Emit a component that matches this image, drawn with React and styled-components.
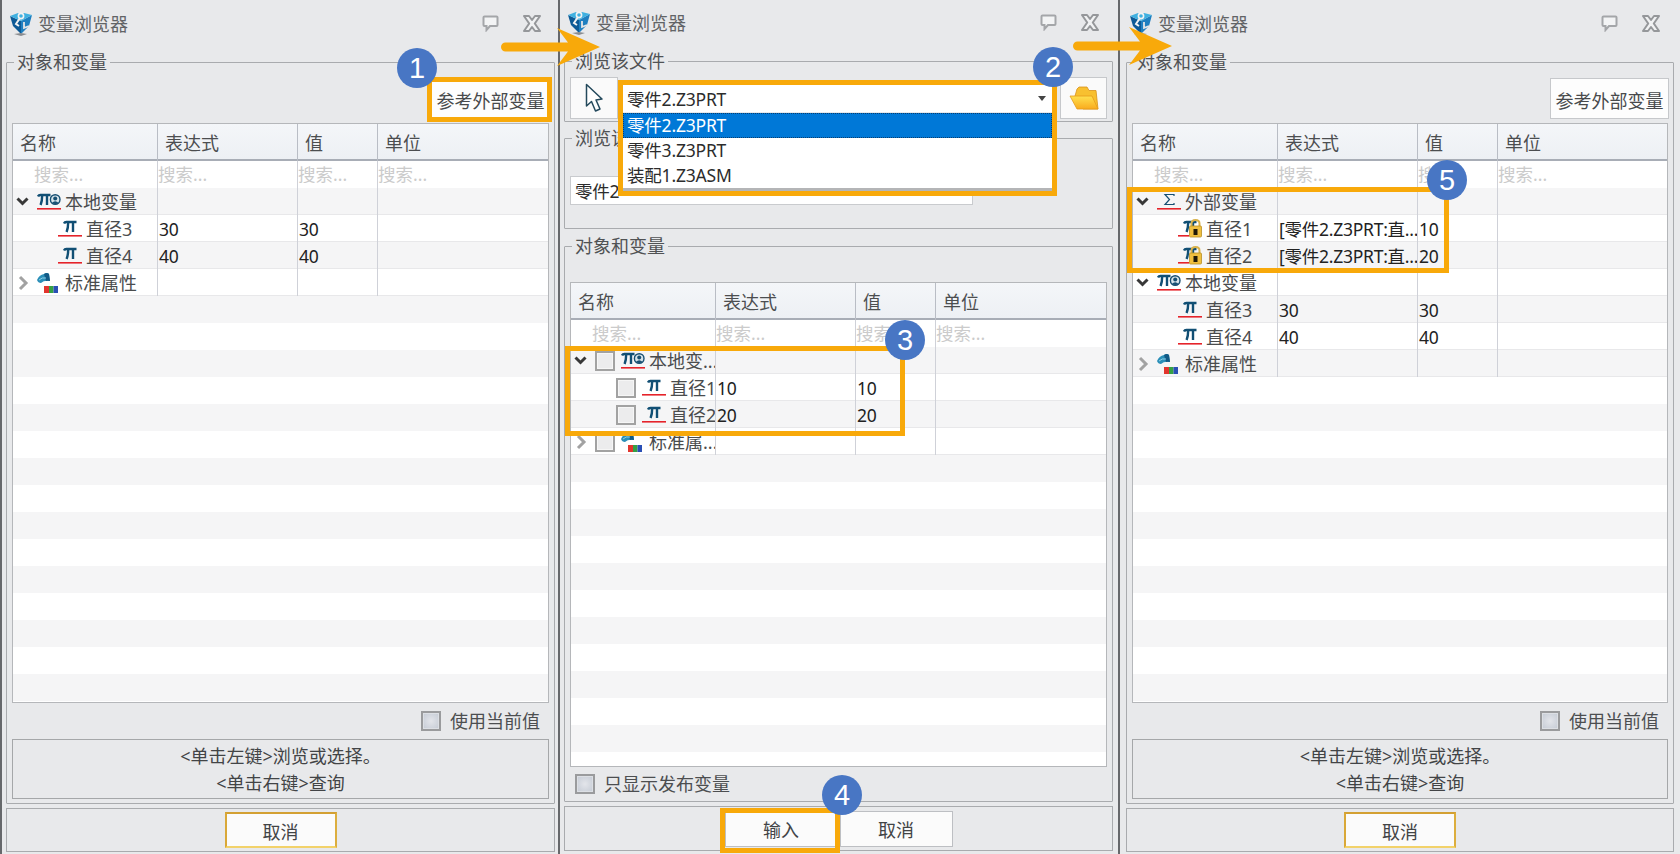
import React from 'react';
import styled, { createGlobalStyle } from 'styled-components';

const ORANGE = '#f8a90a';
const FONT = '"Noto Sans", "Noto Sans CJK SC", sans-serif';

const GlobalStyle = createGlobalStyle`
  html, body {
    margin: 0;
    padding: 0;
    background: #e8e9eb;
  }
  body {
    font-family: ${FONT};
    font-size: 18px;
    color: #444;
  }
  * {
    box-sizing: border-box;
  }
`;

const Page = styled.div`
  position: relative;
  display: flex;
  width: 1680px;
  height: 854px;
  overflow: hidden;
  background: #e8e9eb;
`;

const Panel = styled.section`
  display: flex;
  flex-direction: column;
  flex: 0 0 560px;
  height: 854px;
  padding: 0 ${(p) => p.$right}px ${(p) => p.$bottom}px ${(p) => p.$left}px;
  border-left: ${(p) => (p.$barLeft ? 2 : 0)}px solid #66686b;
  border-right: ${(p) => (p.$barRight ? 2 : 0)}px solid #66686b;
`;

const TitleBar = styled.header`
  display: flex;
  align-items: flex-start;
  flex: 0 0 ${(p) => p.$height}px;
  padding: ${(p) => p.$height - 39}px 14px 0 4px;
`;

const TitleText = styled.h1`
  flex: 1;
  margin: 0 0 0 6px;
  font-size: 18px;
  font-weight: 400;
  line-height: 24px;
  color: #626466;
`;

const TitleAction = styled.span`
  display: flex;
  margin-left: ${(p) => p.$gap}px;
  padding-top: 3px;
`;

const GroupBox = styled.fieldset`
  display: flex;
  flex-direction: column;
  flex: ${(p) => (p.$grow ? '1 1 0' : '0 0 auto')};
  min-height: 0;
  min-width: 0;
  margin: ${(p) => p.$top || 0}px 0 0;
  padding: 0 5px ${(p) => p.$pad || 0}px;
  border: 1px solid #a9abae;
  border-radius: 1px;
`;

const GroupTitle = styled.legend`
  height: 22px;
  margin-left: 2px;
  padding: 0 3px;
  font-size: 18px;
  line-height: 22px;
  color: #505254;
`;

const RefRow = styled.div`
  display: flex;
  justify-content: flex-end;
  margin: 5px -1px 0 0;
`;

const RefButton = styled.button`
  width: 119px;
  height: 41px;
  padding: 2px 0 0;
  border: 1px solid #c6c8cb;
  background: #fdfdfd;
  font: inherit;
  color: #484a4c;
`;

const Table = styled.div`
  display: flex;
  flex-direction: column;
  flex: 1 1 0;
  min-height: 0;
  margin-top: ${(p) => p.$top}px;
  overflow: hidden;
  border: 1px solid #b5b7ba;
  background: #fff;
`;

const Columns = styled.div`
  display: grid;
  flex: none;
  grid-template-columns: 145px 140px 80px 1fr;
`;

const HeaderRow = styled(Columns)`
  height: 37px;
  border-bottom: 2px solid #a8adb6;
  background: linear-gradient(#f4f6f9, #edf0f4);
`;

const HeaderCell = styled.div`
  padding-left: 7px;
  border-right: 1px solid #b9bdc5;
  line-height: 39px;
  color: #4c4e50;

  &:last-child {
    border-right: 0;
  }
`;

const Row = styled(Columns)`
  height: 27px;
  background: ${(p) => (p.$alt ? '#f5f5f6' : '#fff')};
  box-shadow: ${(p) => (p.$line ? 'inset 0 -1px 0 #e8e8ea' : 'none')};
`;

const Cell = styled.div`
  overflow: hidden;
  padding-left: 1px;
  border-right: 1px solid #cfd1d8;
  font-size: 17.5px;
  letter-spacing: -0.25px;
  line-height: 28px;
  white-space: nowrap;
  color: #222;

  &:last-child {
    border-right: 0;
  }
`;

const SearchCell = styled(Cell)`
  padding-left: ${(p) => (p.$first ? 21 : 0)}px;
  letter-spacing: 0;
  line-height: 26px;
  color: #cbcbcb;
`;

const NameCell = styled(Cell)`
  display: flex;
  align-items: center;
  padding-left: ${(p) => p.$indent}px;
  font-size: 18px;
  letter-spacing: 0;
  color: #4a4c4d;
`;

const FillerRow = styled.div`
  flex: none;
  height: 27px;
  background: ${(p) => (p.$alt ? '#f5f5f6' : '#fff')};
`;

const Twisty = styled.span`
  display: flex;
  flex: 0 0 13px;
  margin-right: 8px;
`;

const IconSlot = styled.span`
  display: flex;
  flex: 0 0 24px;
  margin-right: 4px;
`;

const TreeCheck = styled.span`
  flex: 0 0 20px;
  height: 20px;
  margin-right: 6px;
  border: 2px solid #a2a2a2;
  background: #ececed;
  box-shadow: inset 0 0 0 1px #f6f6f6;
`;

const CheckRow = styled.div`
  display: flex;
  align-items: center;
  justify-content: ${(p) => (p.$end ? 'flex-end' : 'flex-start')};
  gap: 9px;
  flex: none;
  height: 20px;
  margin-top: ${(p) => p.$top}px;
  padding: ${(p) => (p.$end ? '0 9px 0 0' : '0 0 0 5px')};
  line-height: 20px;
  color: #4c4e50;
`;

const CheckBox = styled.span`
  flex: 0 0 20px;
  height: 20px;
  border: 2px solid #9a9b9d;
  background: radial-gradient(circle at 50% 50%, #e3e5ea 0%, #c4cad4 100%);
  box-shadow: inset 0 0 0 1px #dcdfe4;
`;

const HintBox = styled.div`
  flex: none;
  height: 60px;
  margin-top: 8px;
  padding-top: 3px;
  border: 1px solid #a5a7a9;
  line-height: 27px;
  text-align: center;
  color: #424446;
`;

const Footer = styled.footer`
  display: flex;
  align-items: center;
  justify-content: center;
  gap: 2px;
  flex: 0 0 ${(p) => p.$height}px;
  margin-top: 4px;
  border: 1px solid #a9abae;
`;

const FooterButton = styled.button`
  width: ${(p) => (p.$active ? 112 : 113)}px;
  height: 36px;
  padding: ${(p) => (p.$active ? 2 : 0)}px 0 0;
  border-style: solid;
  border-width: ${(p) => (p.$active ? 2 : 1)}px;
  border-color: ${(p) => (p.$active ? '#d3a032 #dcae3e #f2d26a #d9a838' : '#bdbfc3')};
  background: #fbfbfb;
  font: inherit;
  color: #424446;
`;

const FileRow = styled.div`
  display: flex;
  height: 42px;
  margin-top: 5px;
  align-items: center;
`;

const ToolButton = styled.button`
  display: flex;
  align-items: center;
  justify-content: center;
  flex: 0 0 ${(p) => p.$width}px;
  height: 42px;
  padding: 0;
  border: 1px solid #c6c8cb;
  background: #fafafa;
`;

/* the open combo must stay above the group boxes that follow it */
const Combo = styled.div`
  position: relative;
  z-index: ${(p) => (p.$open ? 2 : 0)};
  display: flex;
  align-items: center;
  flex: ${(p) => (p.$open ? '1' : 'none')};
  width: ${(p) => (p.$width ? `${p.$width}px` : 'auto')};
  height: ${(p) => p.$height}px;
  margin: ${(p) => p.$margin};
  padding-left: 4px;
  border: ${(p) => (p.$open ? '0' : '1px solid #c9cbce')};
  background: #fff;
  font-size: 17.5px;
  letter-spacing: -0.2px;
  color: #2c2c2c;
`;

const Caret = styled.span`
  position: absolute;
  right: ${(p) => p.$right}px;
  top: 50%;
  margin-top: -2px;
  border-style: solid;
  border-width: 5px 4px 0;
  border-color: #444 transparent transparent;
`;

const DropList = styled.ul`
  position: absolute;
  top: 28px;
  left: 0;
  right: 0;
  margin: 0;
  padding: 0;
  list-style: none;
  background: #fff;
  border-bottom: 3px solid #b4b5b7;
`;

const DropItem = styled.li`
  height: 25px;
  padding-left: 4px;
  line-height: 24px;
  color: ${(p) => (p.$selected ? '#fff' : '#2c2c2c')};
  background: ${(p) => (p.$selected ? '#0078d7' : '#fff')};
  outline: ${(p) => (p.$selected ? '1px dotted #0a3f70' : 'none')};
  outline-offset: -1px;
`;

/* annotations on top of the three screenshots */
const Highlight = styled.div`
  position: absolute;
  z-index: 3;
  left: ${(p) => p.$x}px;
  top: ${(p) => p.$y}px;
  width: ${(p) => p.$w}px;
  height: ${(p) => p.$h}px;
  border: 5px solid ${ORANGE};
`;

const Badge = styled.div`
  position: absolute;
  z-index: 3;
  left: ${(p) => p.$x - 20}px;
  top: ${(p) => p.$y - 20}px;
  width: 40px;
  height: 40px;
  border-radius: 50%;
  background: #4876c4;
  font: 29px/40px "Liberation Sans", Arial, sans-serif;
  text-align: center;
  color: #fff;
`;

const ArrowWrap = styled.svg`
  position: absolute;
  z-index: 3;
  left: ${(p) => p.$x}px;
  top: ${(p) => p.$y}px;
`;

const LogoIcon = () => (
  <svg width="22" height="24" viewBox="0 0 22 24">
    <path d="M0 4 L11 9 L11 22 L3 14 Z" fill="#0d5a96" />
    <path d="M22 3 L11 9 L11 22 L19 14 Z" fill="#1f7fc0" />
    <path d="M0 4 L8 1 L14 1 L22 3 L11 9 Z" fill="#3fb0e0" />
    <path d="M4 22 L11 24 L17 22 L11 21 Z" fill="#8a8c90" />
    <circle cx="11" cy="4" r="2.6" fill="none" stroke="#f2f2f2" strokeWidth="1.6" />
    <path d="M10 6 L6 12 L9 14" fill="none" stroke="#f2f2f2" strokeWidth="2" />
    <path d="M14 10 L14 16 L19 14" fill="none" stroke="#e6e6e6" strokeWidth="1.8" />
  </svg>
);

const CommentIcon = () => (
  <svg width="17" height="17" viewBox="0 0 17 17">
    <path d="M2.5 1.5 H14.5 Q15.5 1.5 15.5 2.5 V10 Q15.5 11 14.5 11 H8 L4.5 15 V11 H2.5 Q1.5 11 1.5 10 V2.5 Q1.5 1.5 2.5 1.5 Z" fill="#f3f4f5" stroke="#a4a6a9" strokeWidth="2" />
  </svg>
);

const CloseIcon = () => (
  <svg width="18" height="17" viewBox="0 0 18 17">
    <path d="M1 1 H6 L9 5 L12 1 H17 L11.8 8.5 L17 16 H12 L9 12 L6 16 H1 L6.2 8.5 Z" fill="#f1f2f3" stroke="#95979a" strokeWidth="2" strokeLinejoin="round" />
  </svg>
);

const PiGlyph = ({ x = 0 }) => (
  <g transform={`translate(${x} 0)`} fill="none" stroke="#114f74" strokeWidth="2.4">
    <path d="M1 4.5 Q1.6 3 3.4 3 H13.5" />
    <path d="M5.2 3 Q5.2 9 3.6 13" />
    <path d="M10 3 V13" />
  </g>
);

const RedLine = ({ from = 0, to = 24 }) => <rect x={from} y="16" width={to - from} height="1.6" fill="#e5232a" />;

const PiIcon = () => (
  <svg width="24" height="19" viewBox="0 0 24 19">
    <PiGlyph x={5} />
    <RedLine />
  </svg>
);

const LocalIcon = () => (
  <svg width="24" height="19" viewBox="0 0 24 19">
    <PiGlyph x={0} />
    <circle cx="18.2" cy="7.5" r="4.8" fill="#d7e4ea" stroke="#174f72" strokeWidth="1.4" />
    <circle cx="18.2" cy="6.4" r="2" fill="#174f72" />
    <path d="M14.8 11 Q18.2 7.4 21.6 11 Q18.2 13.2 14.8 11 Z" fill="#174f72" />
    <RedLine />
  </svg>
);

const SigmaIcon = () => (
  <svg width="24" height="19" viewBox="0 0 24 19">
    <path d="M17 4 V2.5 H8 L12.5 7.5 L8 12.5 H17 V11" fill="none" stroke="#174f72" strokeWidth="1.2" />
    <RedLine />
  </svg>
);

const LockedIcon = () => (
  <svg width="24" height="19" viewBox="0 0 24 19">
    <PiGlyph x={5} />
    <RedLine to={11} />
    <path d="M13.5 8 V4.5 Q13.5 1 17.5 1 Q21.5 1 21.5 4.5 V8" fill="none" stroke="#d9b24a" strokeWidth="2" />
    <rect x="11.5" y="7" width="12" height="11" rx="1" fill="#f0c040" stroke="#b78f24" strokeWidth="0.8" />
    <rect x="15.5" y="10" width="4" height="6" fill="#201a08" />
  </svg>
);

const StdIcon = () => (
  <svg width="24" height="22" viewBox="0 0 24 22">
    <path d="M0 8 Q2 3 7 2 Q10 0 12 2 L13 9 Q7 8 4 11 Q1 11 0 8 Z" fill="#2b8fb8" />
    <path d="M7 2 Q10 0 12 2 L13 9 Q11 8.6 9 9 Z" fill="#125a86" />
    <path d="M2 8 Q5 5 9 6" fill="none" stroke="#8fd0e8" strokeWidth="1" />
    <rect x="7" y="14" width="5" height="7" fill="#e2352e" />
    <rect x="12" y="14" width="4.5" height="7" fill="#35a145" />
    <rect x="16.5" y="14" width="4.5" height="7" fill="#2a4fb5" />
  </svg>
);

const CursorIcon = () => (
  <svg width="18" height="30" viewBox="0 0 18 30">
    <path d="M1.5 1.5 V23 L6.5 18.5 L10.5 28 L15 26 L11 17 L17 16 Z" fill="#fff" stroke="#24495c" strokeWidth="1.5" strokeLinejoin="round" />
  </svg>
);

const FolderIcon = () => (
  <svg width="30" height="24" viewBox="0 0 30 24">
    <defs>
      <linearGradient id="folderFront" x1="0" y1="0" x2="0" y2="1">
        <stop offset="0" stopColor="#ffe04f" />
        <stop offset="1" stopColor="#f9ab1e" />
      </linearGradient>
    </defs>
    <path d="M6 10 L8 3 L10 1 H18 L20 4.5 H27 L29 23 H14 Z" fill="#f8c030" stroke="#d8921c" strokeWidth="0.8" />
    <path d="M1 10 H23 L29 23 H8 Z" fill="url(#folderFront)" stroke="#e59a1a" strokeWidth="0.8" />
  </svg>
);

const ChevronDown = () => (
  <svg width="13" height="13" viewBox="0 0 13 13">
    <path d="M1.5 3.5 L6.5 8.5 L11.5 3.5" fill="none" stroke="#383838" strokeWidth="3" />
  </svg>
);

const ChevronRight = () => (
  <svg width="13" height="16" viewBox="0 0 13 16">
    <path d="M4 2 L10 8 L4 14" fill="none" stroke="#a2a2a2" strokeWidth="3" />
  </svg>
);

const Arrow = ({ x, y }) => (
  <ArrowWrap $x={x} $y={y} width="100" height="40" viewBox="0 0 100 40">
    <path d="M4.5 15.5 H67 L56 1 L99 20 L56 39 L67 24.5 H4.5 A4.5 4.5 0 0 1 4.5 15.5 Z" fill={ORANGE} />
  </ArrowWrap>
);

const ICONS = {
  pi: PiIcon,
  local: LocalIcon,
  sigma: SigmaIcon,
  locked: LockedIcon,
  std: StdIcon,
};

const TOTAL_ROWS = 24;

const TreeRow = ({ item, alt, checks }) => {
  const Icon = ICONS[item.icon];
  const isGroup = item.open !== undefined;
  return (
    <Row $alt={alt} $line>
      <NameCell $indent={isGroup ? 3 : 45}>
        {isGroup && <Twisty>{item.open ? <ChevronDown /> : <ChevronRight />}</Twisty>}
        {checks && <TreeCheck />}
        <IconSlot><Icon /></IconSlot>
        {item.name}
      </NameCell>
      <Cell>{item.expr}</Cell>
      <Cell>{item.value}</Cell>
      <Cell />
    </Row>
  );
};

const VariableTable = ({ rows, top, checks }) => (
  <Table $top={top}>
    <HeaderRow>
      <HeaderCell>名称</HeaderCell>
      <HeaderCell>表达式</HeaderCell>
      <HeaderCell>值</HeaderCell>
      <HeaderCell>单位</HeaderCell>
    </HeaderRow>
    <Row>
      <SearchCell $first>搜索...</SearchCell>
      <SearchCell>搜索...</SearchCell>
      <SearchCell>搜索...</SearchCell>
      <SearchCell>搜索...</SearchCell>
    </Row>
    {rows.map((item, index) => (
      <TreeRow key={item.name} item={item} alt={index % 2 === 0} checks={checks} />
    ))}
    {Array.from({ length: TOTAL_ROWS - rows.length }, (_, index) => (
      <FillerRow key={index.toString()} $alt={(rows.length + index) % 2 === 0} />
    ))}
  </Table>
);

const Title = ({ height }) => (
  <TitleBar $height={height}>
    <LogoIcon />
    <TitleText>变量浏览器</TitleText>
    <TitleAction $gap={0}><CommentIcon /></TitleAction>
    <TitleAction $gap={24}><CloseIcon /></TitleAction>
  </TitleBar>
);

const Hint = () => (
  <HintBox>
    <div>{'<单击左键>浏览或选择。'}</div>
    <div>{'<单击右键>查询'}</div>
  </HintBox>
);

const FIRST_ROWS = [
  { name: '本地变量', icon: 'local', open: true },
  { name: '直径3', icon: 'pi', expr: '30', value: '30' },
  { name: '直径4', icon: 'pi', expr: '40', value: '40' },
  { name: '标准属性', icon: 'std', open: false },
];

const SECOND_ROWS = [
  { name: '本地变...', icon: 'local', open: true },
  { name: '直径1', icon: 'pi', expr: '10', value: '10' },
  { name: '直径2', icon: 'pi', expr: '20', value: '20' },
  { name: '标准属...', icon: 'std', open: false },
];

const THIRD_ROWS = [
  { name: '外部变量', icon: 'sigma', open: true },
  { name: '直径1', icon: 'locked', expr: '[零件2.Z3PRT:直...', value: '10' },
  { name: '直径2', icon: 'locked', expr: '[零件2.Z3PRT:直...', value: '20' },
  ...FIRST_ROWS,
];

const FILES = ['零件2.Z3PRT', '零件3.Z3PRT', '装配1.Z3ASM'];

const App = () => (
  <Page>
    <GlobalStyle />

    <Panel $barLeft $barRight $left={4} $right={3} $bottom={2}>
      <Title height={51} />
      <GroupBox $grow $pad={4}>
        <GroupTitle>对象和变量</GroupTitle>
        <RefRow><RefButton>参考外部变量</RefButton></RefRow>
        <VariableTable rows={FIRST_ROWS} top={4} />
        <CheckRow $end $top={8}><CheckBox />使用当前值</CheckRow>
        <Hint />
      </GroupBox>
      <Footer $height={44}><FooterButton $active>取消</FooterButton></Footer>
    </Panel>

    <Panel $barRight $left={4} $right={5} $bottom={3}>
      <Title height={50} />
      <GroupBox $pad={2}>
        <GroupTitle>浏览该文件</GroupTitle>
        <FileRow>
          <ToolButton $width={48}><CursorIcon /></ToolButton>
          <Combo $open $height={27} $margin="0 8px 0 5px">
            零件2.Z3PRT
            <Caret $right={6} />
            <DropList>
              {FILES.map((file, index) => (
                <DropItem key={file} $selected={index === 0}>{file}</DropItem>
              ))}
            </DropList>
          </Combo>
          <ToolButton $width={47}><FolderIcon /></ToolButton>
        </FileRow>
      </GroupBox>
      <GroupBox $top={5} $pad={23}>
        <GroupTitle>浏览该</GroupTitle>
        <Combo $width={403} $height={29} $margin="27px 0 0">
          零件2
          <Caret $right={7} />
        </Combo>
      </GroupBox>
      <GroupBox $grow $top={6} $pad={7}>
        <GroupTitle>对象和变量</GroupTitle>
        <VariableTable rows={SECOND_ROWS} top={25} checks />
        <CheckRow $top={7}><CheckBox />只显示发布变量</CheckRow>
      </GroupBox>
      <Footer $height={45}>
        <FooterButton>输入</FooterButton>
        <FooterButton>取消</FooterButton>
      </Footer>
    </Panel>

    <Panel $left={6} $right={6} $bottom={2}>
      <Title height={51} />
      <GroupBox $grow $pad={4}>
        <GroupTitle>对象和变量</GroupTitle>
        <RefRow><RefButton>参考外部变量</RefButton></RefRow>
        <VariableTable rows={THIRD_ROWS} top={4} />
        <CheckRow $end $top={8}><CheckBox />使用当前值</CheckRow>
        <Hint />
      </GroupBox>
      <Footer $height={44}><FooterButton $active>取消</FooterButton></Footer>
    </Panel>

    <Highlight $x={427} $y={77} $w={125} $h={45} />
    <Highlight $x={618} $y={80} $w={439} $h={116} />
    <Highlight $x={565} $y={346} $w={340} $h={90} />
    <Highlight $x={720} $y={808} $w={120} $h={45} />
    <Highlight $x={1127} $y={187} $w={322} $h={86} />
    <Arrow x={501} y={27} />
    <Arrow x={1073} y={26} />
    <Badge $x={417} $y={68}>1</Badge>
    <Badge $x={1053} $y={67}>2</Badge>
    <Badge $x={905} $y={340}>3</Badge>
    <Badge $x={842} $y={795}>4</Badge>
    <Badge $x={1447} $y={180}>5</Badge>
  </Page>
);

export default App;
